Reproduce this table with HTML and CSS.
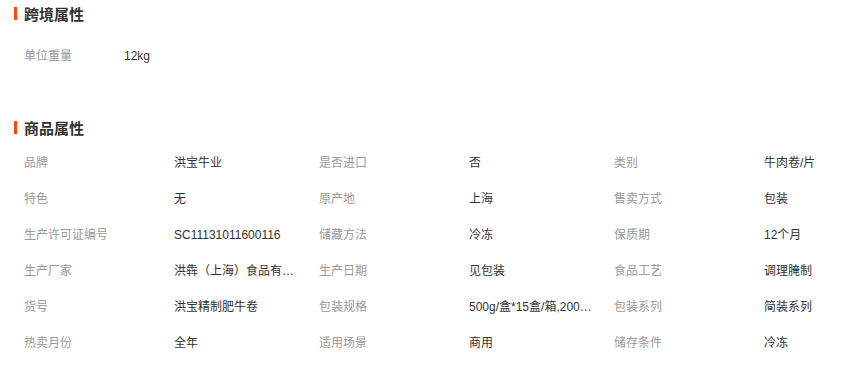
FILE: index.html
```html
<!DOCTYPE html>
<html lang="zh-CN">
<head>
<meta charset="utf-8">
<title>属性</title>
<link rel="stylesheet" href="styles.css">
</head>
<body>
<div class="page">
  <section class="block block-cross">
    <h3 class="block-title"><span class="bar"></span>跨境属性</h3>
    <div class="attrs attrs-single">
      <div class="attr-label">单位重量</div><div class="attr-value">12kg</div>
    </div>
  </section>
  <section class="block block-goods">
    <h3 class="block-title"><span class="bar"></span>商品属性</h3>
    <div class="attrs attrs-grid">
      <div class="attr-label">品牌</div><div class="attr-value">洪宝牛业</div>
      <div class="attr-label">是否进口</div><div class="attr-value">否</div>
      <div class="attr-label">类别</div><div class="attr-value">牛肉卷/片</div>

      <div class="attr-label">特色</div><div class="attr-value">无</div>
      <div class="attr-label">原产地</div><div class="attr-value">上海</div>
      <div class="attr-label">售卖方式</div><div class="attr-value">包装</div>

      <div class="attr-label">生产许可证编号</div><div class="attr-value">SC11131011600116</div>
      <div class="attr-label">储藏方法</div><div class="attr-value">冷冻</div>
      <div class="attr-label">保质期</div><div class="attr-value">12个月</div>

      <div class="attr-label">生产厂家</div><div class="attr-value" title="洪犇（上海）食品有限公司">洪犇（上海）食品有限公司</div>
      <div class="attr-label">生产日期</div><div class="attr-value">见包装</div>
      <div class="attr-label">食品工艺</div><div class="attr-value">调理腌制</div>

      <div class="attr-label">货号</div><div class="attr-value">洪宝精制肥牛卷</div>
      <div class="attr-label">包装规格</div><div class="attr-value" title="500g/盒*15盒/箱,200g/盒*30盒/箱">500g/盒*15盒/箱,200g/盒*30盒/箱</div>
      <div class="attr-label">包装系列</div><div class="attr-value">简装系列</div>

      <div class="attr-label">热卖月份</div><div class="attr-value">全年</div>
      <div class="attr-label">适用场景</div><div class="attr-value">商用</div>
      <div class="attr-label">储存条件</div><div class="attr-value">冷冻</div>
    </div>
  </section>
</div>
</body>
</html>
```

FILE: styles.css
```css
html, body {
  margin: 0;
  padding: 0;
  background: #fff;
  overflow: hidden;
}

.page {
  padding-left: 14px;
  font-family: "Liberation Sans", "Noto Sans CJK SC", sans-serif;
  font-size: 12px;
  color: #333;
}

.block-title {
  display: flex;
  align-items: center;
  gap: 7px;
  margin: 0;
  height: 26px;
  font-family: "Noto Sans CJK SC", sans-serif;
  font-size: 15px;
  font-weight: bold;
  color: #333;
}

.bar {
  display: block;
  width: 3px;
  height: 13px;
  background: #ff4a00;
}

.attrs {
  display: grid;
  padding-left: 10px;
  line-height: 36px;
}

.attrs-single {
  grid-template-columns: 100px auto;
  margin-top: 12px;
}

.block-goods {
  margin-top: 40px;
}

.attrs-grid {
  grid-template-columns: 150px 145px 150px 145px 150px auto;
  margin-top: 5px;
}

.attr-label {
  color: #999;
  white-space: nowrap;
}

.attr-value {
  color: #333;
  white-space: nowrap;
  overflow: hidden;
  text-overflow: ellipsis;
  max-width: 125px;
}
```
